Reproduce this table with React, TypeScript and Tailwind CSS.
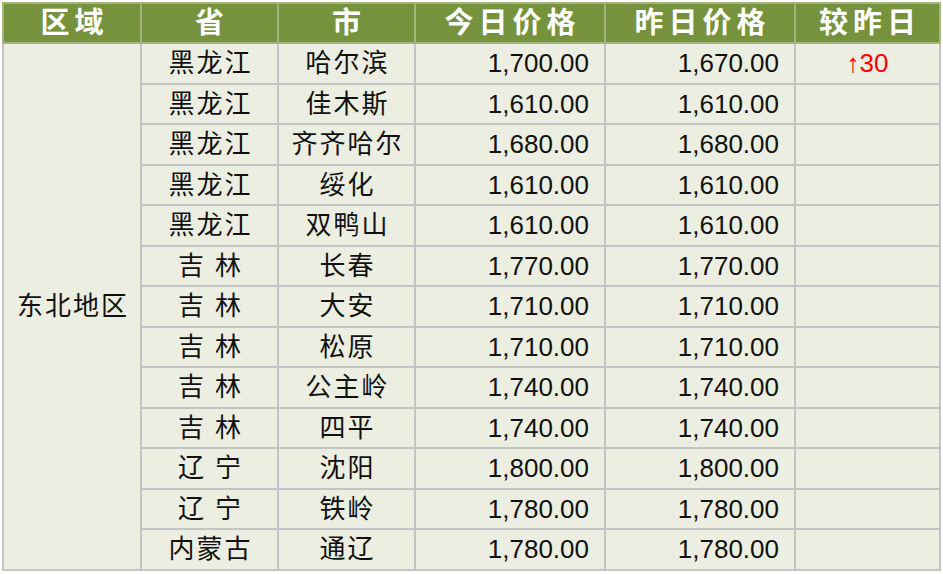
const rows: [string, string, string, string, string][] = [
  ["黑龙江", "哈尔滨", "1,700.00", "1,670.00", "↑30"],
  ["黑龙江", "佳木斯", "1,610.00", "1,610.00", ""],
  ["黑龙江", "齐齐哈尔", "1,680.00", "1,680.00", ""],
  ["黑龙江", "绥化", "1,610.00", "1,610.00", ""],
  ["黑龙江", "双鸭山", "1,610.00", "1,610.00", ""],
  ["吉 林", "长春", "1,770.00", "1,770.00", ""],
  ["吉 林", "大安", "1,710.00", "1,710.00", ""],
  ["吉 林", "松原", "1,710.00", "1,710.00", ""],
  ["吉 林", "公主岭", "1,740.00", "1,740.00", ""],
  ["吉 林", "四平", "1,740.00", "1,740.00", ""],
  ["辽 宁", "沈阳", "1,800.00", "1,800.00", ""],
  ["辽 宁", "铁岭", "1,780.00", "1,780.00", ""],
  ["内蒙古", "通辽", "1,780.00", "1,780.00", ""],
];

const headers = ["区域", "省", "市", "今日价格", "昨日价格", "较昨日"];

export default function App() {
  return (
    <div className="min-h-[574px] w-[943px] bg-white pl-[2px] pt-[2px] font-['Liberation_Sans','Noto_Sans_CJK_SC',sans-serif]">
      <table className="w-[937px] table-fixed border-collapse border-2 border-[#c4c4c4] bg-[#ebeee0] text-[26px] text-[#111]">
        <colgroup>
          <col className="w-[138px]" />
          <col className="w-[137px]" />
          <col className="w-[137px]" />
          <col className="w-[190px]" />
          <col className="w-[190px]" />
          <col className="w-[145px]" />
        </colgroup>
        <thead>
          <tr className="h-[40px] bg-[#76923c]">
            {headers.map((h) => (
              <th
                key={h}
                className="border-2 border-[#a3b57e] p-0 pl-[5px] text-center text-[29px] font-bold leading-none tracking-[5px] text-white"
              >
                {h}
              </th>
            ))}
          </tr>
        </thead>
        <tbody>
          {rows.map((r, i) => (
            <tr key={i} className="h-[40.5px]">
              {i === 0 && (
                <td rowSpan={rows.length} className="border-2 border-[#c4c4c4] p-0 pl-[2px] text-center leading-none tracking-[2px]">
                  东北地区
                </td>
              )}
              <td className="border-2 border-[#c4c4c4] p-0 pl-[2px] text-center leading-none tracking-[2px] whitespace-pre">{r[0]}</td>
              <td className="border-2 border-[#c4c4c4] p-0 pl-[2px] text-center leading-none tracking-[2px]">{r[1]}</td>
              <td className="border-2 border-[#c4c4c4] p-0 pr-[15px] text-right leading-none">{r[2]}</td>
              <td className="border-2 border-[#c4c4c4] p-0 pr-[15px] text-right leading-none">{r[3]}</td>
              <td className="border-2 border-[#c4c4c4] p-0 text-center leading-none text-[#ff0000]">{r[4]}</td>
            </tr>
          ))}
        </tbody>
      </table>
    </div>
  );
}
